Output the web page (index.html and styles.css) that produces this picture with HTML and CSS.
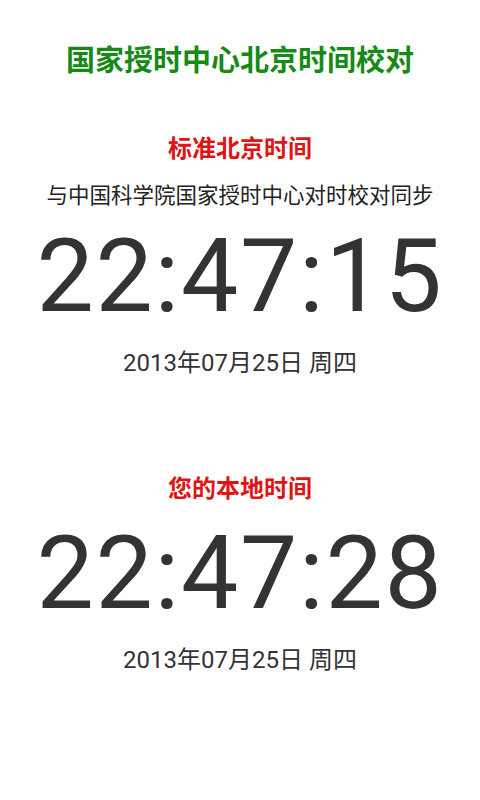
FILE: index.html
```html
<!DOCTYPE html>
<html lang="zh-CN">
<head>
<meta charset="utf-8">
<title>国家授时中心北京时间校对</title>
<link rel="stylesheet" href="styles.css">
</head>
<body>
<main class="page">
  <h1 class="title">国家授时中心北京时间校对</h1>
  <section class="block first">
    <h2 class="label">标准北京时间</h2>
    <p class="sub">与中国科学院国家授时中心对时校对同步</p>
    <div class="clock">22:47:15</div>
    <div class="date">2013年07月25日 周四</div>
  </section>
  <section class="block second">
    <h2 class="label">您的本地时间</h2>
    <div class="clock clock-local">22:47:28</div>
    <div class="date">2013年07月25日 周四</div>
  </section>
</main>
</body>
</html>
```
FILE: styles.css
```css
html, body {
  margin: 0;
  padding: 0;
  background: #ffffff;
}
body {
  width: 480px;
  height: 800px;
  font-family: "Roboto", "Noto Sans CJK SC", sans-serif;
  color: #333333;
}
.page {
  display: flex;
  flex-direction: column;
  align-items: center;
  padding-top: 43px;
}
.title {
  margin: 0;
  font-size: 29px;
  line-height: 30px;
  font-weight: bold;
  color: #158a15;
  font-family: "Noto Sans CJK SC", sans-serif;
}
.block {
  display: flex;
  flex-direction: column;
  align-items: center;
  width: 100%;
}
.first { margin-top: 59px; }
.second { margin-top: 94px; }
.label {
  margin: 0;
  font-size: 24px;
  line-height: 30px;
  font-weight: bold;
  color: #e01414;
  font-family: "Noto Sans CJK SC", sans-serif;
}
.sub {
  margin: 17px 0 0;
  font-size: 21.5px;
  line-height: 30px;
  color: #222222;
  font-family: "Noto Sans CJK SC", sans-serif;
}
.clock {
  margin-top: 16px;
  font-family: "Roboto", sans-serif;
  font-size: 102px;
  line-height: 102px;
  letter-spacing: 1.7px;
  color: #333333;
}
.clock-local { margin-top: 20px; }
.date {
  margin-top: 21px;
  font-size: 24px;
  line-height: 30px;
  color: #333333;
}
```
